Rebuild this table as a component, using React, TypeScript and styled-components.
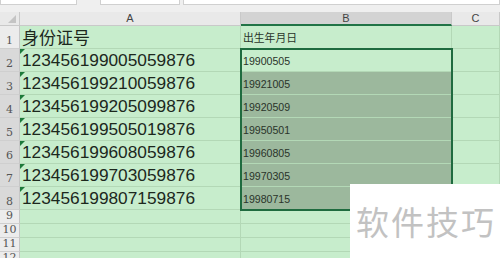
import React from "react";
import styled, { createGlobalStyle } from "styled-components";

const Global = createGlobalStyle`
  html, body { margin: 0; padding: 0; background: #ffffff; overflow: hidden; }
  * { box-sizing: border-box; }
`;

const Page = styled.div`
  position: relative;
  width: 500px;
  height: 258px;
  overflow: hidden;
  font-family: "Liberation Sans", "Noto Sans CJK SC", sans-serif;
  background: #c7edcc;
`;

const Toolbar = styled.div`
  height: 12px;
  background: #efefef;
  display: flex;
  align-items: flex-start;
`;

const InputBox = styled.div<{ $w: number; $ml: number }>`
  width: ${(p) => p.$w}px;
  margin-left: ${(p) => p.$ml}px;
  height: 5px;
  background: #ffffff;
  border: 1px solid #d0d0d0;
  border-top: none;
`;

const Sheet = styled.div`
  position: relative;
  display: grid;
  grid-template-columns: 20px 221px 211px 48px;
  grid-template-rows: 14px repeat(8, 23px) repeat(4, 14px);
`;

const Corner = styled.div`
  position: relative;
  background: #e9e9e9;
  border-right: 1px solid #c9c9c9;
  border-bottom: 1px solid #c9c9c9;
  &::after {
    content: "";
    position: absolute;
    right: 3px;
    bottom: 2px;
    width: 0;
    height: 0;
    border-left: 8px solid transparent;
    border-bottom: 8px solid #c4c4c4;
  }
`;

const ColHead = styled.div<{ $sel?: boolean }>`
  background: ${(p) => (p.$sel ? "#d3d3d3" : "#e9e9e9")};
  border-right: 1px solid #c9c9c9;
  border-bottom: ${(p) => (p.$sel ? "2px solid #217346" : "1px solid #c9c9c9")};
  color: #444;
  font-size: 11px;
  display: flex;
  align-items: center;
  justify-content: center;
  line-height: 1;
`;

const RowHead = styled.div<{ $sel?: boolean }>`
  background: ${(p) => (p.$sel ? "#d9d9d9" : "#ececec")};
  border-right: 1px solid #c6c6c6;
  border-bottom: 1px solid #cfcfcf;
  color: #555;
  font-size: 11px;
  font-family: "DejaVu Serif", "Liberation Serif", serif;
  display: flex;
  align-items: flex-end;
  justify-content: center;
  padding-bottom: 2px;
  line-height: 1;
`;

const Cell = styled.div<{ $shade?: boolean; $flag?: boolean; $big?: boolean }>`
  position: relative;
  background: ${(p) => (p.$shade ? "#9cb89d" : "#c7edcc")};
  border-right: 1px solid #b3d8b6;
  border-bottom: 1px solid #b3d8b6;
  display: flex;
  align-items: flex-end;
  padding: 0 0 ${(p) => (p.$big ? "1px" : "3px")} 2px;
  color: ${(p) => (p.$big ? "#1c281d" : "#2a342a")};
  font-size: ${(p) => (p.$big ? "17.3px" : "10.6px")};
  line-height: 1.1;
  white-space: nowrap;
  &::before {
    content: "";
    display: ${(p) => (p.$flag ? "block" : "none")};
    position: absolute;
    left: 0;
    top: 0;
    width: 0;
    height: 0;
    border-top: 5px solid #1d7a3a;
    border-right: 5px solid transparent;
  }
`;

const CjkText = styled.span<{ $size: number }>`
  display: block;
  font-family: "Noto Sans CJK SC", sans-serif;
  font-size: ${(p) => p.$size}px;
  line-height: 1;
  padding-bottom: 2px;
`;

const Selection = styled.div`
  position: absolute;
  left: 240px;
  top: 36px;
  width: 213px;
  height: 163px;
  border: 2px solid #1f6b3f;
  pointer-events: none;
`;

const Watermark = styled.div`
  position: absolute;
  left: 350px;
  top: 184px;
  width: 150px;
  height: 74px;
  background: #ffffff;
  display: flex;
  align-items: center;
  justify-content: flex-end;
  padding-right: 4px;
  color: #c2c2c2;
  font-family: "Noto Sans CJK SC", sans-serif;
  font-size: 33px;
  letter-spacing: 2px;
`;

const ids = [
  "123456199005059876",
  "123456199210059876",
  "123456199205099876",
  "123456199505019876",
  "123456199608059876",
  "123456199703059876",
  "123456199807159876",
];
const births = [
  "19900505",
  "19921005",
  "19920509",
  "19950501",
  "19960805",
  "19970305",
  "19980715",
];

export default function App() {
  return (
    <>
      <Global />
      <Page>
        <Toolbar>
          <InputBox $w={77} $ml={0} />
          <InputBox $w={80} $ml={23} />
          <InputBox $w={317} $ml={3} />
        </Toolbar>
        <Sheet>
          <Corner />
          <ColHead>A</ColHead>
          <ColHead $sel>B</ColHead>
          <ColHead>C</ColHead>

          <RowHead>1</RowHead>
          <Cell $big>
            <CjkText $size={17}>身份证号</CjkText>
          </Cell>
          <Cell>
            <CjkText $size={10.8}>出生年月日</CjkText>
          </Cell>
          <Cell />

          {ids.map((id, i) => (
            <React.Fragment key={id}>
              <RowHead $sel>{i + 2}</RowHead>
              <Cell $big $flag>
                {id}
              </Cell>
              <Cell $shade={i > 0}>{births[i]}</Cell>
              <Cell />
            </React.Fragment>
          ))}

          {[9, 10, 11, 12].map((n) => (
            <React.Fragment key={n}>
              <RowHead>{n}</RowHead>
              <Cell />
              <Cell />
              <Cell />
            </React.Fragment>
          ))}
          <Selection />
        </Sheet>
        <Watermark>软件技巧</Watermark>
      </Page>
    </>
  );
}
